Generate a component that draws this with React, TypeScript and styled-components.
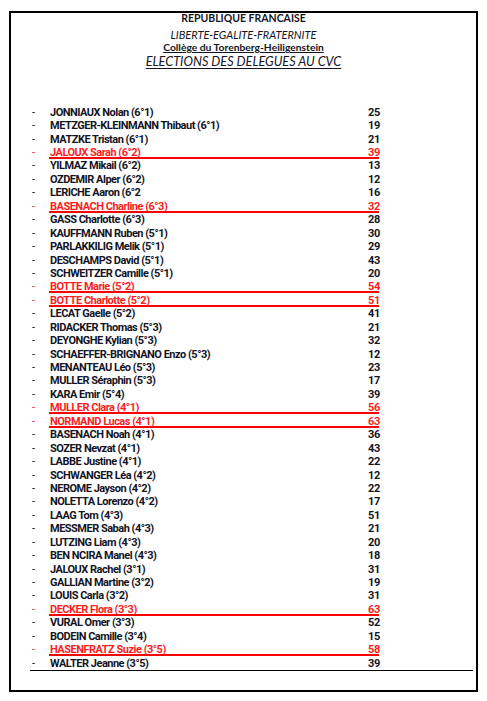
import React from "react";
import styled, { createGlobalStyle } from "styled-components";

const Global = createGlobalStyle`
  html, body { margin: 0; padding: 0; background: #fff; }
  body { font-family: Lato, "Open Sans", "Liberation Sans", sans-serif; color: #141424; }
`;

const Page = styled.div`
  width: 487px;
  height: 701px;
  box-sizing: border-box;
  padding: 11px 9px 0 9px;
`;

const Frame = styled.div`
  width: 469px;
  height: 681px;
  box-sizing: border-box;
  border: 2px solid #000;
  display: flex;
  flex-direction: column;
`;

const Header = styled.header`
  display: flex;
  flex-direction: column;
  align-items: center;
  color: #141424;
`;

const Republic = styled.div`
  font-weight: 700;
  font-size: 10.5px;
  line-height: 11px;
`;

const Motto = styled.div`
  font-style: italic;
  font-size: 11px;
  line-height: 12px;
  margin-top: 5px;
`;

const School = styled.div`
  font-weight: 700;
  font-size: 10.3px;
  line-height: 12px;
  text-decoration: underline;
  text-underline-offset: 1px;
`;

const Election = styled.div`
  font-style: italic;
  font-size: 12.7px;
  line-height: 16px;
  text-decoration: underline;
  text-decoration-thickness: 1px;
  text-underline-offset: 2px;
`;

const List = styled.ul`
  list-style: none;
  margin: 37px 0 0 21px;
  padding: 0;
  width: 348px;
  display: flex;
  flex-direction: column;
`;

const Row = styled.li<{ $red?: boolean }>`
  position: relative;
  display: grid;
  grid-template-columns: 18px 1fr auto;
  align-items: center;
  height: 13.44px;
  font-family: Roboto, "Liberation Sans", sans-serif;
  font-size: 11px;
  font-weight: 700;
  letter-spacing: -0.5px;
  line-height: 12px;
  color: ${(p) => (p.$red ? "#fb1e1e" : "#141424")};

  &::after {
    content: "";
    display: ${(p) => (p.$red ? "block" : "none")};
    position: absolute;
    left: 17px;
    right: 1px;
    top: 10.8px;
    height: 2px;
    background: #ff0000;
  }
`;

const Dash = styled.span`
  font-weight: 400;
  letter-spacing: 0;
`;

const Name = styled.span``;

const Score = styled.span`
  text-align: right;
  letter-spacing: -0.3px;
`;

const BottomRule = styled.div`
  margin-left: 19px;
  width: 443px;
  height: 1px;
  background: #000;
`;

type Entry = { name: string; score: number; red?: boolean };

const entries: Entry[] = [
  { name: "JONNIAUX Nolan (6°1)", score: 25 },
  { name: "METZGER-KLEINMANN Thibaut (6°1)", score: 19 },
  { name: "MATZKE Tristan (6°1)", score: 21 },
  { name: "JALOUX Sarah (6°2)", score: 39, red: true },
  { name: "YILMAZ Mikail (6°2)", score: 13 },
  { name: "OZDEMIR Alper (6°2)", score: 12 },
  { name: "LERICHE Aaron (6°2", score: 16 },
  { name: "BASENACH Charline (6°3)", score: 32, red: true },
  { name: "GASS Charlotte (6°3)", score: 28 },
  { name: "KAUFFMANN Ruben (5°1)", score: 30 },
  { name: "PARLAKKILIG Melik (5°1)", score: 29 },
  { name: "DESCHAMPS David (5°1)", score: 43 },
  { name: "SCHWEITZER Camille (5°1)", score: 20 },
  { name: "BOTTE Marie (5°2)", score: 54, red: true },
  { name: "BOTTE Charlotte (5°2)", score: 51, red: true },
  { name: "LECAT Gaelle (5°2)", score: 41 },
  { name: "RIDACKER Thomas (5°3)", score: 21 },
  { name: "DEYONGHE Kylian (5°3)", score: 32 },
  { name: "SCHAEFFER-BRIGNANO Enzo (5°3)", score: 12 },
  { name: "MENANTEAU Léo (5°3)", score: 23 },
  { name: "MULLER Séraphin (5°3)", score: 17 },
  { name: "KARA Emir (5°4)", score: 39 },
  { name: "MULLER Clara (4°1)", score: 56, red: true },
  { name: "NORMAND Lucas (4°1)", score: 63, red: true },
  { name: "BASENACH Noah (4°1)", score: 36 },
  { name: "SOZER Nevzat (4°1)", score: 43 },
  { name: "LABBE Justine (4°1)", score: 22 },
  { name: "SCHWANGER Léa (4°2)", score: 12 },
  { name: "NEROME Jayson (4°2)", score: 22 },
  { name: "NOLETTA Lorenzo (4°2)", score: 17 },
  { name: "LAAG Tom (4°3)", score: 51 },
  { name: "MESSMER Sabah (4°3)", score: 21 },
  { name: "LUTZING Liam (4°3)", score: 20 },
  { name: "BEN NCIRA Manel (4°3)", score: 18 },
  { name: "JALOUX Rachel (3°1)", score: 31 },
  { name: "GALLIAN Martine (3°2)", score: 19 },
  { name: "LOUIS Carla (3°2)", score: 31 },
  { name: "DECKER Flora (3°3)", score: 63, red: true },
  { name: "VURAL Omer (3°3)", score: 52 },
  { name: "BODEIN Camille (3°4)", score: 15 },
  { name: "HASENFRATZ Suzie (3°5)", score: 58, red: true },
  { name: "WALTER Jeanne (3°5)", score: 39 },
];

export default function App() {
  return (
    <>
      <Global />
      <Page>
        <Frame>
          <Header>
            <Republic>REPUBLIQUE FRANCAISE</Republic>
            <Motto>LIBERTE-EGALITE-FRATERNITE</Motto>
            <School>Collège du Torenberg-Heiligenstein</School>
            <Election>ELECTIONS DES DELEGUES AU CVC</Election>
          </Header>
          <List>
            {entries.map((e) => (
              <Row key={e.name} $red={e.red}>
                <Dash>-</Dash>
                <Name>{e.name}</Name>
                <Score>{e.score}</Score>
              </Row>
            ))}
          </List>
          <BottomRule />
        </Frame>
      </Page>
    </>
  );
}
